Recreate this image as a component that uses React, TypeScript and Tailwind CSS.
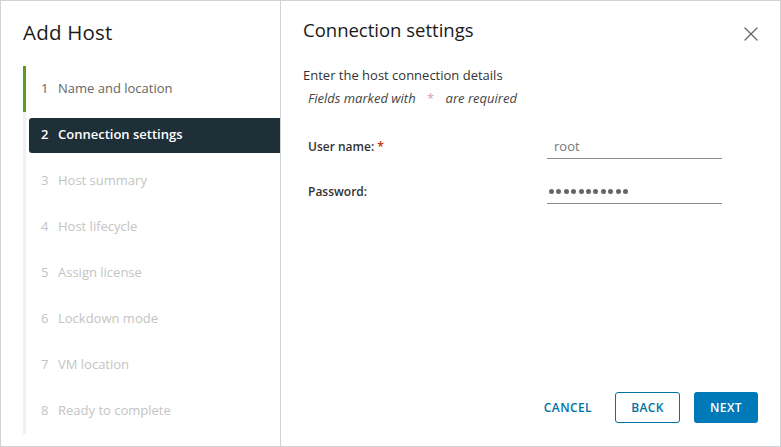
import { X } from "lucide-react";

const steps = [
  "Name and location",
  "Connection settings",
  "Host summary",
  "Host lifecycle",
  "Assign license",
  "Lockdown mode",
  "VM location",
  "Ready to complete",
];

const current = 1;

export default function App() {
  return (
    <div
      className="w-[781px] h-[447px] bg-white border border-[#cfd3d6] flex text-[#333]"
      style={{ fontFamily: '"Open Sans", "Liberation Sans", sans-serif' }}
    >
      {/* step navigation */}
      <aside className="w-[280px] shrink-0 border-r border-[#cfd3d6] pl-[22px] pt-[17px]">
        <h1 className="text-[20.5px] leading-[28px] text-[#1a1a1a] tracking-[0.2px]">Add Host</h1>
        <ol className="mt-[20px]">
          {steps.map((label, i) => {
            const done = i < current;
            const active = i === current;
            return (
              <li
                key={label}
                className={`h-[46px] flex items-center pl-[3px] border-l-[3px] ${
                  done ? "border-[#5d9b22]" : "border-[#eef1f3]"
                }`}
              >
                <div
                  className={`w-full h-[35px] flex items-center pl-[12px] rounded-l-[3px] text-[13px] ${
                    active
                      ? "bg-[#1f2f38] text-white font-semibold"
                      : done
                      ? "text-[#666]"
                      : "text-[#c4c4c4]"
                  }`}
                >
                  <span className="w-[17px]">{i + 1}</span>
                  <span>{label}</span>
                </div>
              </li>
            );
          })}
        </ol>
      </aside>

      {/* content */}
      <main className="flex-1 flex flex-col pl-[22px] pr-[22px] pt-[17px] pb-[23px]">
        <div className="flex items-start justify-between">
          <h2 className="text-[18.5px] leading-[24px] text-[#1a1a1a]">Connection settings</h2>
          <button className="mt-[4px] -mr-[5px] text-[#666]">
            <X size={24} strokeWidth={1.2} />
          </button>
        </div>

        <p className="mt-[20px] text-[13px] leading-[18px]">Enter the host connection details</p>
        <p className="mt-[5px] ml-[5px] text-[13px] leading-[18px] italic text-[#444]">
          Fields marked with <span className="mx-[8px] text-[#d9a0a0] not-italic">*</span> are required
        </p>

        <div className="mt-[28px] flex flex-col gap-[21px] ml-[5px]">
          <div className="flex items-center h-[24px]">
            <label className="w-[239px] text-[12px] font-semibold text-[#333]">
              User name: <span className="text-[#c92100]">*</span>
            </label>
            <div className="w-[175px] h-[24px] flex items-center border-b border-[#8c8c8c] pl-[7px] text-[13px] text-[#777]">
              root
            </div>
          </div>
          <div className="flex items-center h-[24px]">
            <label className="w-[239px] text-[12px] font-semibold text-[#333]">Password:</label>
            <div className="w-[175px] h-[24px] flex items-center gap-[2.4px] border-b border-[#8c8c8c] pl-[2px]">
              {Array.from({ length: 11 }).map((_, i) => (
                <span key={i} className="w-[5px] h-[5px] rounded-full bg-[#666]" />
              ))}
            </div>
          </div>
        </div>

        <div className="mt-auto flex items-center justify-end gap-[11px]">
          <button className="h-[31px] px-[12px] text-[12px] font-semibold tracking-[0.4px] text-[#0072a3]">
            CANCEL
          </button>
          <button className="h-[31px] w-[65px] rounded-[3px] border border-[#0072a3] text-[12px] font-semibold tracking-[0.4px] text-[#0072a3]">
            BACK
          </button>
          <button className="ml-[3px] h-[31px] w-[64px] rounded-[3px] bg-[#0079b8] text-[12px] font-semibold tracking-[0.4px] text-white">
            NEXT
          </button>
        </div>
      </main>
    </div>
  );
}
